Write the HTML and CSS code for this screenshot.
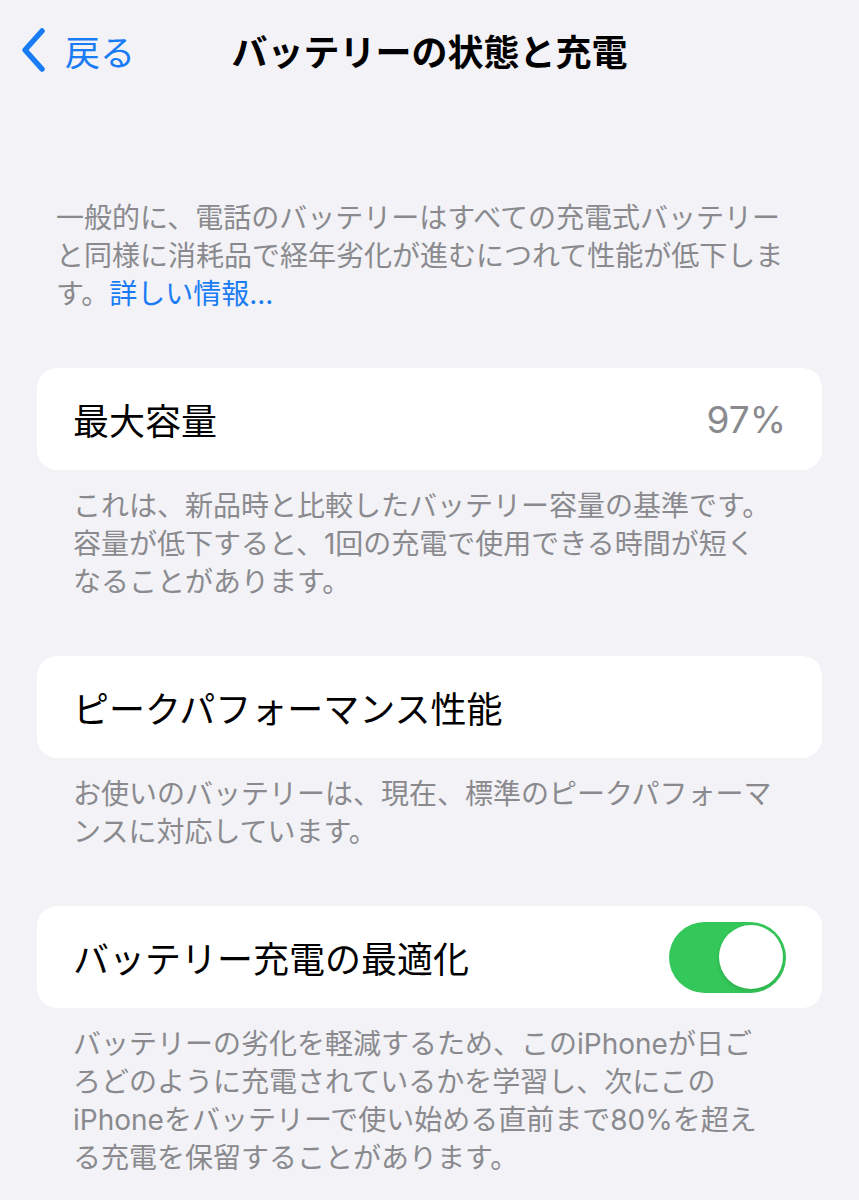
FILE: index.html
```html
<!DOCTYPE html>
<html lang="ja">
<head>
  <meta charset="UTF-8">
  <meta name="viewport" content="width=device-width, initial-scale=1.0">
  <title>バッテリーの状態と充電</title>
  <link rel="stylesheet" href="styles.css">
</head>
<body>
  <nav class="navbar">
    <a class="back" href="#">
      <svg class="chevron" width="28" height="46" viewBox="0 0 28 46">
        <path d="M22 4 L5 23 L22 42" fill="none" stroke="#1a7cf4" stroke-width="5.5" stroke-linecap="round" stroke-linejoin="round"/>
      </svg>
      <span>戻る</span>
    </a>
    <h1 class="title">バッテリーの状態と充電</h1>
    <div></div>
  </nav>

  <main class="content">
    <p class="intro">
      一般的に、電話のバッテリーはすべての充電式バッテリー<br>
      と同様に消耗品で経年劣化が進むにつれて性能が低下しま<br>
      す。<a href="#" class="more">詳しい情報...</a>
    </p>

    <!-- 最大容量 -->
    <section class="group">
      <div class="card">
        <span class="label">最大容量</span>
        <span class="value">97%</span>
      </div>
      <p class="note">
        これは、新品時と比較したバッテリー容量の基準です。<br>
        容量が低下すると、1回の充電で使用できる時間が短く<br>
        なることがあります。
      </p>
    </section>

    <!-- ピークパフォーマンス -->
    <section class="group">
      <div class="card">
        <span class="label">ピークパフォーマンス性能</span>
      </div>
      <p class="note">
        お使いのバッテリーは、現在、標準のピークパフォーマ<br>
        ンスに対応しています。
      </p>
    </section>

    <!-- 充電の最適化 -->
    <section class="group">
      <div class="card">
        <span class="label">バッテリー充電の最適化</span>
        <div class="toggle on"><div class="knob"></div></div>
      </div>
      <p class="note">
        バッテリーの劣化を軽減するため、このiPhoneが日ご<br>
        ろどのように充電されているかを学習し、次にこの<br>
        iPhoneをバッテリーで使い始める直前まで80%を超え<br>
        る充電を保留することがあります。
      </p>
    </section>
  </main>
</body>
</html>
```

FILE: styles.css
```css
body {
  margin: 0;
  padding: 0;
  background-color: #f2f2f7;
  font-family: "Inter", "Noto Sans CJK JP", sans-serif;
  color: #000;
}

.navbar {
  height: 100px;
  display: grid;
  grid-template-columns: 1fr auto 1fr;
  align-items: center;
}

.back {
  display: flex;
  align-items: center;
  gap: 17px;
  margin-left: 20px;
  color: #1a7cf4;
  text-decoration: none;
  font-size: 35px;
}

.title {
  margin: 0;
  font-size: 36px;
  font-weight: 700;
}

.content {
  padding: 0 37px 40px;
}

.intro {
  margin: 99px 0 0;
  padding-left: 19px;
  font-size: 28px;
  line-height: 38px;
  color: #8a8a8e;
}

.more {
  color: #1a7cf4;
  text-decoration: none;
}

.group {
  margin-top: 55px;
}

.card {
  height: 102px;
  background-color: #fff;
  border-radius: 20px;
  padding: 0 36px 0 36px;
  display: flex;
  align-items: center;
  justify-content: space-between;
}

.label {
  font-size: 36px;
}

.value {
  font-size: 37px;
  color: #8a8a8e;
}

.note {
  margin: 17px 0 0;
  padding-left: 36px;
  font-size: 28px;
  line-height: 38px;
  color: #8a8a8e;
}

.toggle {
  width: 117px;
  height: 71px;
  border-radius: 36px;
  background-color: #e5e5ea;
  padding: 3.5px;
  box-sizing: border-box;
  display: flex;
  justify-content: flex-start;
}

.toggle.on {
  background-color: #34c759;
  justify-content: flex-end;
}

.knob {
  width: 64px;
  height: 64px;
  border-radius: 50%;
  background-color: #fff;
  box-shadow: 0 2px 4px rgba(0, 0, 0, 0.12);
}
```
